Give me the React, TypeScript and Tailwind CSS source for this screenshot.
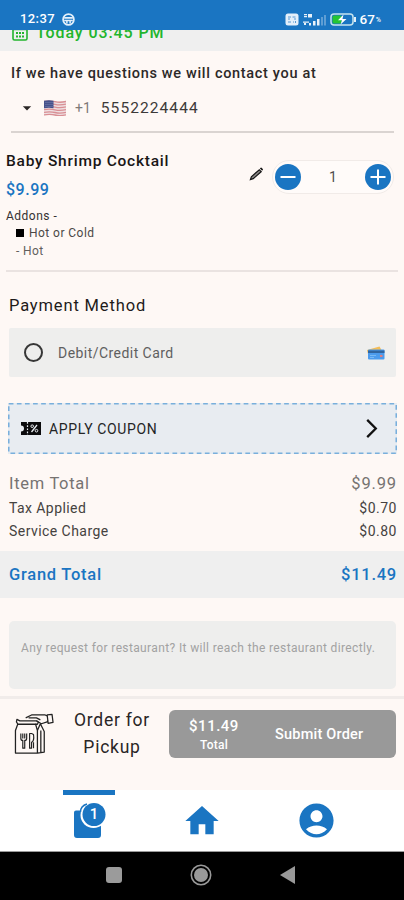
import { useState } from 'react';
import { MdAccountCircle, MdArrowDropDown, MdHome } from 'react-icons/md';

function StatusBar() {
  return (
    <header className="relative z-10 flex h-[30px] items-center bg-[#1a75c2] pl-[20px] pr-[23px] pt-[8px] text-[13px] font-medium text-white">
      <span className="w-[36px] tracking-[0.4px]">12:37</span>
      <svg viewBox="0 0 12 12" className="ml-[6px] h-[13px] w-[13px]" fill="none" stroke="#e3effa">
        <circle cx="6" cy="6" r="5" strokeWidth="1.6" />
        <path d="M2 4.500h8M2 7h8M4.500 7v2.600M7.500 7v2.600" strokeWidth="1.4" />
      </svg>
      <svg viewBox="0 0 14 13" className="ml-auto h-[13px] w-[14px]" fill="none" stroke="#1a75c2">
        <rect x="0.5" y="0.5" width="13" height="12" rx="2.5" fill="#e3effa" stroke="none" />
        <path d="M3 4h3M7.500 4h3M3 6h2M9 6h2M3 9h3M8 9h1M10.500 8v2" strokeWidth="1" opacity="0.7" />
      </svg>
      <svg viewBox="0 0 24 13" className="ml-[3px] h-[13px] w-[24px]" fill="white">
        <path d="M2 1h3v1.200H2zM2 3h3v1.200H2zM6 1h4v3.500H6zM1 8.500h6v1.300H1zM2 10h2v2H2zM7 10h2v2.500H7zM11 8h2.500v4.500H11zM15 6h2.500v6.500H15z" opacity="0.9" />
        <path d="M19 4h2v8.500h-2zM22 2h2v10.500h-2z" opacity="0.3" />
      </svg>
      <svg viewBox="0 0 27 13" className="ml-[4px] h-[13px] w-[27px]">
        <rect x="1" y="1" width="22" height="11" rx="3" fill="none" stroke="#c5e3ee" strokeWidth="1.500" />
        <rect x="2.500" y="2.500" width="9" height="8" rx="1.500" fill="#24c534" />
        <path d="M13.500 1.500 8 7.200h4L10.500 11.500l6-5.500h-4z" fill="white" />
        <path d="M25 4v5" stroke="#e3effa" strokeWidth="2" />
      </svg>
      <span className="ml-[2px] text-[13.500px]">67</span>
      <span className="ml-[1px] pt-[3px] text-[7px]">%</span>
    </header>
  );
}

function Flag() {
  return (
    <svg viewBox="0 0 22 16" className="h-[16px] w-[22px]">
      <path d="M0 .8Q6-.2 11 1t11-.2v14.400Q16 16.200 11 15t-11 .5z" fill="#eedfe1" />
      <path
        d="M0 1.500q6-1 11 .2t11-.2M0 4.200q6-1 11 .2t11-.2M0 6.900q6-1 11 .2t11-.2M0 9.600q6-1 11 .2t11-.2M0 12.300q6-1 11 .2t11-.2M0 14.800q6-1 11 .2t11-.2"
        fill="none"
        stroke="#d98f94"
        strokeWidth="1.3"
      />
      <path d="M0 .8Q5-.1 9.500.8v7.400Q5 7.300 0 8.200z" fill="#45518b" />
      <path d="M1.500 2.500h7M1.500 4.500h7M1.500 6.500h7" stroke="#8d96bd" strokeWidth=".7" strokeDasharray="1 1" />
    </svg>
  );
}

function CardsIcon() {
  return (
    <svg viewBox="0 0 20 14" className="h-[14px] w-[20px]">
      <path d="M1 4 13.500.5 15.500 4 3 12z" fill="#f3bd58" />
      <rect x="2" y="3.500" width="16.500" height="10" rx="1" fill="#4c9bed" />
      <path d="M2 4.500h16.500v2.500H2z" fill="#31659f" />
      <path d="M4 9.500h6M4 11.500h4" stroke="#79b9f5" strokeWidth="1" />
      <rect x="14" y="9" width="2.500" height="2" fill="#e37f7d" />
    </svg>
  );
}

function CouponIcon() {
  return (
    <svg viewBox="0 0 20 13" className="h-[13px] w-[20px]">
      <path d="M0 0h20v13H0V9.500a3 3 0 0 0 0-6z" fill="#0b0b0d" />
      <path d="M6.500 0v13" stroke="#e8ecf1" strokeWidth="1.200" strokeDasharray="1.700 1.500" />
      <path d="m10.500 10 5.500-7" stroke="#e8ecf1" strokeWidth="1.300" />
      <circle cx="11.200" cy="4.200" r="1.300" fill="none" stroke="#e8ecf1" />
      <circle cx="15.500" cy="8.700" r="1.300" fill="none" stroke="#e8ecf1" />
    </svg>
  );
}

function PickupIcon() {
  return (
    <svg viewBox="0 0 41 43" className="h-[42px] w-[40px]" fill="none" stroke="#222" strokeWidth="1.300" strokeLinejoin="round">
      <path d="M4 11 1.500 18v23H24V18l-2-7M24 18l3-7 4 8v21l-7 1M27.500 18v22.500" />
      <path d="M3 6.500 6 8h17l2 1.500-1 2H4L2.500 9z" />
      <path d="M12 5 18 2h14l2 1M23 8l5 3 6-2 1-2M15 5h8l4 2M34 2l5-.5 1 8-5 1z" />
      <path d="M7 21v5q0 2 2 2v8h2v-8q2 0 2-2v-5M9 21v5M11 21v5M16 21v15h2v-6q3-1 2-8l-2-1zM20 30v6" strokeWidth="1.200" />
    </svg>
  );
}

function OrderItem() {
  const [quantity, setQuantity] = useState(1);

  return (
    <section className="mx-[6px] flex h-[139px] justify-between border-b-2 border-[#eae3e1] pt-[17px]">
      <div className="whitespace-nowrap">
        <h2 className="pt-[1px] text-[15.500px] font-medium leading-[20px] tracking-[0.750px] text-[#191616]">
          Baby Shrimp Cocktail
        </h2>
        <p className="mt-[9px] text-[16px] font-medium leading-[20px] tracking-[0.500px] text-[#1a75c2]">$9.99</p>
        <p className="mt-[7px] text-[12px] leading-[18px] tracking-[0.500px] text-[#343131]">Addons -</p>
        <p className="-mt-[1px] flex h-[18px] items-center text-[12px] tracking-[0.450px] text-[#4b4846]">
          <span className="ml-[10px] mr-[5px] h-[8px] w-[8px] bg-black" />
          Hot or Cold
        </p>
        <p className="ml-[10px] text-[12px] leading-[18px] tracking-[0.400px] text-[#625f5d]">- Hot</p>
      </div>
      <div className="mr-[4px] mt-[10px] flex items-start">
        <svg viewBox="0 0 16 16" className="mr-[8px] mt-[6px] h-[15px] w-[15px]">
          <path d="M1.500 14.500 2.500 11.500 11 4l2 2-8.500 7.500z" fill="#8c8987" stroke="#161616" strokeWidth="1.300" />
          <path d="m11.500 2.500 1.500-1 2 2-1 1.500z" fill="#111" />
        </svg>
        <div className="flex h-[34px] w-[122px] items-center justify-between rounded-full border border-[#f1ebe8] bg-[#fffbf9] px-[2px]">
          <button onClick={() => setQuantity(Math.max(1, quantity - 1))} aria-label="Remove one">
            <svg viewBox="0 0 26 26" className="h-[26px] w-[26px]">
              <circle cx="13" cy="13" r="13" fill="#1a75c2" />
              <path d="M5.500 13h15" stroke="white" strokeWidth="2" />
            </svg>
          </button>
          <span className="pt-[1px] text-[14px] text-[#514e4d]">{quantity}</span>
          <button onClick={() => setQuantity(quantity + 1)} aria-label="Add one">
            <svg viewBox="0 0 26 26" className="h-[26px] w-[26px]">
              <circle cx="13" cy="13" r="13" fill="#1a75c2" />
              <path d="M5.500 13h15M13 5.500v15" stroke="white" strokeWidth="2" />
            </svg>
          </button>
        </div>
      </div>
    </section>
  );
}

function Totals() {
  return (
    <section>
      <div className="pl-[9px] pr-[7px] pt-[18px]">
        <div className="flex h-[24px] items-center justify-between pt-[1px] text-[16.500px] text-[#767371]">
          <span className="tracking-[0.700px]">Item Total</span>
          <span className="tracking-[0.850px]">$9.99</span>
        </div>
        <div className="flex h-[25px] items-center justify-between text-[14px] text-[#454240]">
          <span className="tracking-[0.420px]">Tax Applied</span>
          <span className="tracking-[0.500px]">$0.70</span>
        </div>
        <div className="flex h-[21px] items-center justify-between text-[14px] text-[#454240]">
          <span className="tracking-[0.450px]">Service Charge</span>
          <span className="tracking-[0.500px]">$0.80</span>
        </div>
      </div>
      <div className="mt-[9px] flex h-[47px] items-center justify-between bg-[#efefef] pl-[9px] pr-[7px] pt-[2px] text-[16.500px] font-medium text-[#1a75c2]">
        <span className="tracking-[0.740px]">Grand Total</span>
        <span className="tracking-[0.750px]">$11.49</span>
      </div>
    </section>
  );
}

function TabBar() {
  return (
    <nav className="flex h-[62px] justify-center border-b border-[#9a9a9a] bg-white text-[#1a75c2]">
      <div className="flex w-[114px] flex-col items-center pl-[2px]">
        <div className="h-[5px] w-[52px] bg-[#1a75c2]" />
        <div className="relative mt-[6px] h-[37px] w-[34px]">
          <svg viewBox="0 0 34 37" className="h-[37px] w-[34px]">
            <path d="M2 9.500h25q2 0 2 2v22.500q0 3-3 3H5q-3 0-3-3v-22.500q0-2 2-2z" fill="currentColor" />
            <circle cx="21.500" cy="14" r="13" fill="white" />
            <path d="M8.500 11q0-6 6.500-8" stroke="currentColor" strokeWidth="1.500" fill="none" />
            <circle cx="22" cy="13.500" r="11.500" fill="currentColor" />
          </svg>
          <span className="absolute left-[11.500px] top-[4px] w-[21px] text-center text-[15px] font-medium leading-[19px] text-white">
            1
          </span>
        </div>
      </div>
      <div className="flex w-[114px] justify-center pt-[11px]">
        <MdHome className="h-[40px] w-[40px]" />
      </div>
      <div className="flex w-[114px] justify-center pt-[10px]">
        <MdAccountCircle className="h-[41px] w-[41px]" />
      </div>
    </nav>
  );
}

function SystemBar() {
  return (
    <div className="flex h-[48px] items-center justify-center gap-[65px] bg-black pb-[3px] pr-[2px]">
      <div className="ml-[-2px] h-[16px] w-[16px] rounded-[3px] bg-[#9b9b9b]" />
      <svg viewBox="0 0 22 22" className="ml-[3px] h-[22px] w-[22px]">
        <circle cx="11" cy="11" r="9.700" fill="none" stroke="#999" strokeWidth="1.600" />
        <circle cx="11" cy="11" r="7" fill="#999" />
      </svg>
      <svg viewBox="0 0 15 18" className="ml-[3px] h-[18px] w-[15px]">
        <path d="M15 0v18L0 9z" fill="#999" />
      </svg>
    </div>
  );
}

export default function App() {
  const [paid, setPaid] = useState(false);

  return (
    <div className="h-[900px] w-[404px] overflow-hidden bg-[#fef8f5] font-[Roboto,sans-serif]">
      <StatusBar />
      <div className="h-[21px] bg-[#efefef]">
        {/* scrolled partly under the status bar */}
        <div className="relative -top-[8px] flex h-[20px] items-center pl-[12px] text-[#22b52c]">
          <svg viewBox="0 0 16 18" className="h-[18px] w-[16px]" fill="none" stroke="currentColor">
            <rect x="1" y="2" width="14" height="15" rx="1.500" strokeWidth="1.600" />
            <path d="M1 6.500h14" strokeWidth="1.500" />
            <path d="M4 10h8M4 13.500h8" strokeWidth="1.800" strokeDasharray="2 1" />
          </svg>
          <span className="ml-[8px] whitespace-nowrap pt-[1px] text-[16px] font-medium leading-[19px] tracking-[0.900px]">
            Today 03:45 PM
          </span>
        </div>
      </div>

      <section className="mx-[11px] mr-[10px] h-[82px] border-b-2 border-[#dad4d1] pt-[13px]">
        <p className="whitespace-nowrap text-[14.500px] font-medium leading-[20px] tracking-[0.680px] text-[#2c2928]">
          If we have questions we will contact you at
        </p>
        <div className="mt-[14px] flex h-[20px] items-center">
          <MdArrowDropDown className="ml-[6px] h-[20px] w-[20px] text-[#2a2625]" />
          <div className="ml-[7px]">
            <Flag />
          </div>
          <span className="ml-[9px] text-[14px] text-[#7e7977]">+1</span>
          <span className="ml-[10px] pt-[1px] text-[15.500px] tracking-[1.080px] text-[#3c3938]">5552224444</span>
        </div>
      </section>

      <OrderItem />

      <section className="px-[9px] pt-[24px]">
        <h2 className="text-[16.500px] leading-[20px] tracking-[0.850px] text-[#1e1b1a]">Payment Method</h2>
        <button
          onClick={() => setPaid(!paid)}
          className="mt-[12px] flex h-[49px] w-[387px] items-center rounded-[2px] bg-[#eeeeed] pl-[15px] pr-[10px]"
        >
          <span className="flex h-[19px] w-[19px] items-center justify-center rounded-full border-2 border-[#373737]">
            {paid && <span className="h-[9px] w-[9px] rounded-full bg-[#373737]" />}
          </span>
          <span className="ml-[15px] mr-auto pt-[1px] text-[14px] tracking-[0.450px] text-[#5f5f5f]">Debit/Credit Card</span>
          <CardsIcon />
        </button>
      </section>

      <button className="relative ml-[8px] mt-[26px] flex h-[51px] w-[389px] items-center bg-[#e8ecf1] pl-[13px] pr-[19px]">
        <svg className="absolute inset-0 h-[51px] w-[389px]" fill="none">
          <rect x="0.75" y="0.75" width="387.500" height="49.500" stroke="#79afdc" strokeWidth="1.600" strokeDasharray="4.700 3.400" />
        </svg>
        <CouponIcon />
        <span className="ml-[8px] mr-auto pt-[1px] text-[14px] tracking-[0.620px] text-[#242526]">APPLY COUPON</span>
        <svg viewBox="0 0 13 22" className="h-[21px] w-[13px]">
          <path d="m2 2 9 9-9 9" fill="none" stroke="#111" strokeWidth="2.400" />
        </svg>
      </button>

      <Totals />

      <textarea
        className="mx-[9px] mt-[23px] block h-[68px] w-[387px] resize-none rounded-[5px] bg-[#eeeeed] px-[12px] pt-[18px] text-[12px] leading-[18px] tracking-[0.370px] placeholder:text-[#a2a2a2]"
        placeholder="Any request for restaurant? It will reach the restaurant directly."
      />

      <footer className="mt-[7px] flex h-[94px] items-start border-t-[3px] border-[#f1ecea] pt-[11px]">
        <div className="ml-[14px] mt-[3px] w-[41px]">
          <PickupIcon />
        </div>
        <p className="-mt-[3px] ml-[13px] w-[88px] text-center text-[17.500px] leading-[27px] tracking-[0.750px] text-[#292626]">
          Order for Pickup
        </p>
        <button className="ml-[13px] flex h-[48px] w-[227px] items-center rounded-[6px] bg-[#999] text-white">
          <span className="flex w-[90px] flex-col items-center pt-[1px]">
            <span className="text-[15px] font-medium leading-[20px] tracking-[0.500px]">$11.49</span>
            <span className="text-[12px] font-medium leading-[18px] tracking-[0.200px]">Total</span>
          </span>
          <span className="ml-[16px] pt-[1px] text-[14.500px] font-medium tracking-[0.220px]">Submit Order</span>
        </button>
      </footer>

      <TabBar />
      <SystemBar />
    </div>
  );
}
